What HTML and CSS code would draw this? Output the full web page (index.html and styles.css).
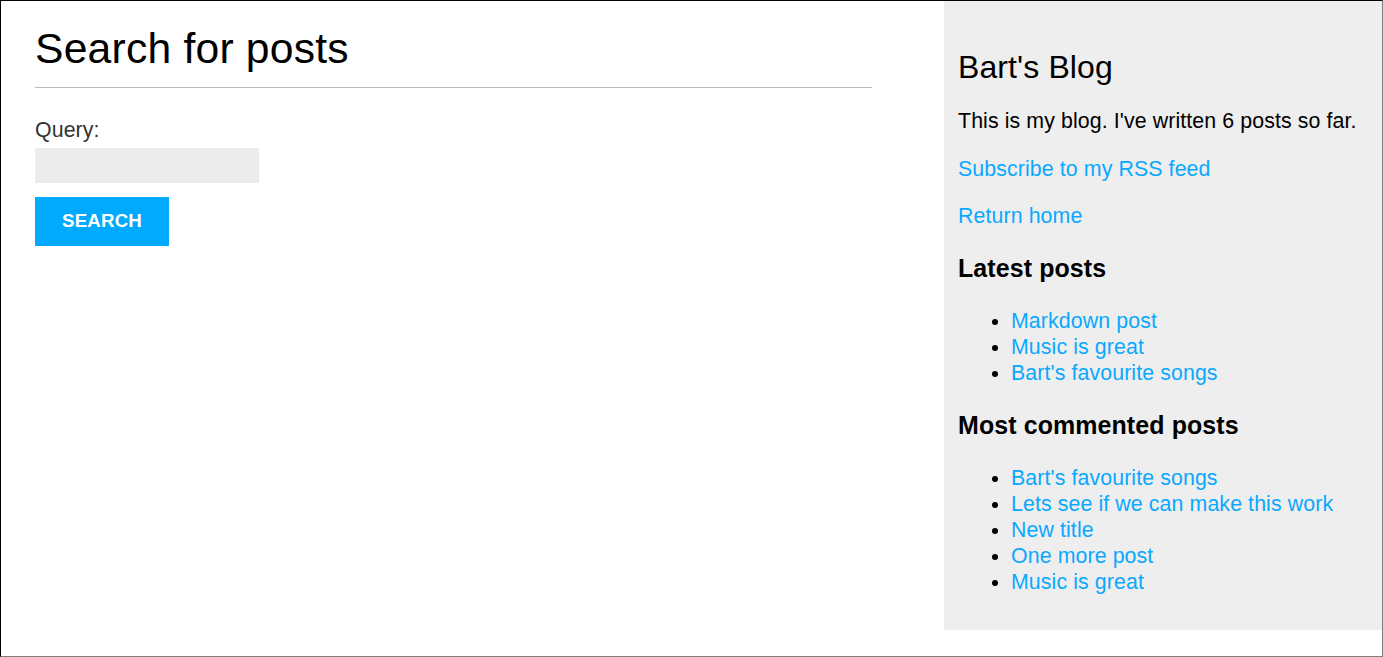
FILE: index.html
```html
<!DOCTYPE html>
<html lang="en">
<head>
<meta charset="utf-8">
<title>Search for posts</title>
<link rel="stylesheet" href="styles.css">
</head>
<body>
<div class="layout">
  <main class="main">
    <h1 class="page-title">Search for posts</h1>
    <hr class="rule">
    <form class="search-form">
      <label class="field-label" for="q">Query:</label>
      <input class="field-input" id="q" type="text">
      <button class="btn" type="button">SEARCH</button>
    </form>
  </main>
  <aside class="sidebar">
    <h2 class="blog-title">Bart's Blog</h2>
    <p class="side-p">This is my blog. I've written 6 posts so far.</p>
    <p class="side-p"><a class="link" href="#">Subscribe to my RSS feed</a></p>
    <p class="side-p"><a class="link" href="#">Return home</a></p>
    <h3 class="side-h">Latest posts</h3>
    <ul class="side-list">
      <li><a class="link" href="#">Markdown post</a></li>
      <li><a class="link" href="#">Music is great</a></li>
      <li><a class="link" href="#">Bart's favourite songs</a></li>
    </ul>
    <h3 class="side-h">Most commented posts</h3>
    <ul class="side-list">
      <li><a class="link" href="#">Bart's favourite songs</a></li>
      <li><a class="link" href="#">Lets see if we can make this work</a></li>
      <li><a class="link" href="#">New title</a></li>
      <li><a class="link" href="#">One more post</a></li>
      <li><a class="link" href="#">Music is great</a></li>
    </ul>
  </aside>
</div>
</body>
</html>
```

FILE: styles.css
```css
html, body {
  margin: 0;
  padding: 0;
}
body {
  box-sizing: border-box;
  height: 100vh;
  border-top: 1px solid #000;
  border-left: 1px solid #000;
  border-right: 1px solid #808080;
  border-bottom: 1px solid #808080;
  font-family: "Liberation Sans", Arial, sans-serif;
  font-size: 21.33px;
  line-height: 26px;
  letter-spacing: 0.1px;
  color: #000;
  background: #fff;
  overflow: hidden;
}
.layout {
  display: flex;
  align-items: flex-start;
  justify-content: space-between;
}
.main {
  width: 837px;
  margin-left: 34px;
}
.page-title {
  font-size: 42.67px;
  font-weight: normal;
  line-height: 51px;
  letter-spacing: 0.2px;
  margin: 22px 0 13px;
}
.rule {
  border: 0;
  border-top: 1px solid #bbb;
  margin: 0;
  height: 0;
}
.search-form {
  display: flex;
  flex-direction: column;
  align-items: flex-start;
  padding-top: 29px;
}
.field-label {
  color: #333;
}
.field-input {
  box-sizing: border-box;
  width: 224px;
  height: 35px;
  margin-top: 5px;
  border: 0;
  background: #ececec;
  font: inherit;
  padding: 0 8px;
}
.btn {
  box-sizing: border-box;
  margin-top: 14px;
  width: 134px;
  height: 49px;
  border: 0;
  background: #00aaff;
  color: #fff;
  font-family: "Liberation Sans", Arial, sans-serif;
  font-weight: bold;
  font-size: 18.67px;
  letter-spacing: 0.2px;
  padding: 0 0 2px;
}
.sidebar {
  box-sizing: border-box;
  width: 438px;
  background: #eee;
  padding: 20px 13px 14px 14px;
}
.blog-title {
  font-size: 32px;
  font-weight: normal;
  line-height: 38px;
  margin: 27px 0 22px;
}
.side-p {
  margin: 21.5px 0;
}
.link {
  color: #0aa8ff;
  text-decoration: none;
}
.side-h {
  font-size: 24.96px;
  line-height: 30px;
  margin: 24px 0 25px;
}
.side-list {
  margin: 21px 0;
  padding-left: 53px;
}
```
